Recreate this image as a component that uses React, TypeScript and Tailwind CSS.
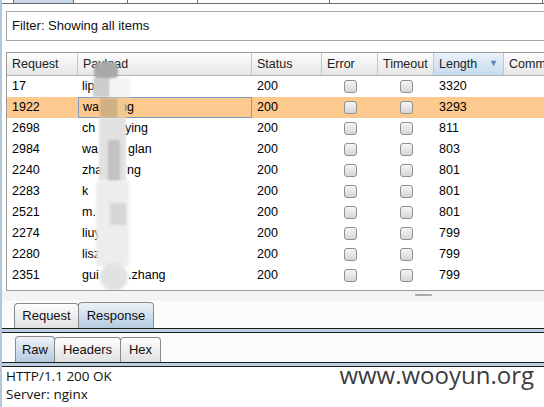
import React from 'react';

const rows = [
  { id: '17', left: 'lip', w: 0, right: '', len: '3320' },
  { id: '1922', left: 'wa', w: 37, right: 'ng', len: '3293', sel: true },
  { id: '2698', left: 'ch', w: 43, right: 'ying', len: '811' },
  { id: '2984', left: 'wa', w: 46, right: 'glan', len: '803' },
  { id: '2240', left: 'zha', w: 45, right: 'ng', len: '801' },
  { id: '2283', left: 'k', w: 0, right: '', len: '801' },
  { id: '2521', left: 'm.', w: 0, right: '', len: '801' },
  { id: '2274', left: 'liuy', w: 0, right: '', len: '799' },
  { id: '2280', left: 'lisz', w: 0, right: '', len: '799' },
  { id: '2351', left: 'gui', w: 46, right: '.zhang', len: '799' },
];

const cols = 'grid grid-cols-[71px_174px_70px_56px_56px_70px_120px]';

function Check() {
  return (
    <span className="block h-[13px] w-[13px] rounded-[3px] border border-[#8e8f90] bg-linear-to-b from-[#f5f5f5] to-[#d6d6d6]" />
  );
}

function Tab({ label, w, active }: { label: string; w: string; active?: boolean }) {
  return (
    <div
      className={`${w} flex items-center justify-center rounded-t-[4px] border border-b-0 border-[#8a8a8a] text-[13px] text-[#111] -ml-px first:ml-0 ${
        active
          ? 'h-[26px] bg-linear-to-b from-[#eef3f8] to-[#b5cadf]'
          : 'h-[25px] bg-linear-to-b from-[#fdfdfd] to-[#e0e0e0]'
      }`}
    >
      {label}
    </div>
  );
}

export default function App() {
  return (
    <div className="flex h-[407px] w-[544px] flex-col overflow-hidden border-l-2 border-[#b4c6d9] bg-[#fbfbfb] font-['Liberation_Sans',Arial,sans-serif]">
      {/* top tab strip remnants */}
      <div className="flex h-[4px] shrink-0 border-b border-[#6b6b6b] bg-white">
        <div className="w-[12px] border-r border-[#6b6b6b]" />
        <div className="w-[60px] border-r border-[#6b6b6b] bg-[#c9d8e7]" />
        <div className="w-[54px] border-r border-[#6b6b6b]" />
        <div className="w-[70px] border-r border-[#6b6b6b]" />
        <div className="w-[132px] border-r border-[#6b6b6b]" />
        <div className="w-[213px] border-r border-[#6b6b6b]" />
      </div>

      <div className="shrink-0 bg-white pb-[0px]">
        {/* filter */}
        <div className="ml-[4px] mt-[7px] flex h-[30px] items-center border border-r-0 border-[#a5a5a5] bg-white pl-[5px] text-[13px] text-[#111]">
          Filter: Showing all items
        </div>

        {/* results table */}
        <div className="relative ml-[4px] mt-[11px] h-[239px] overflow-hidden border border-r-0 border-[#9c9c9c] bg-white text-[12.5px] text-black">
          <div className={`${cols} h-[23px] border-b border-[#b4b4b4] text-[#222]`}>
            {['Request', 'Payload', 'Status', 'Error', 'Timeout'].map((h) => (
              <div
                key={h}
                className="flex items-center border-r border-[#c6c6c6] bg-linear-to-b from-[#fdfdfd] to-[#e6e6e6] pl-[5px]"
              >
                {h}
              </div>
            ))}
            <div className="flex items-center justify-between border-r border-[#c6c6c6] bg-linear-to-b from-[#eaf2fa] to-[#c6daee] pl-[5px] pr-[5px]">
              Length
              <span className="text-[9px] text-[#5a7fa8]">▼</span>
            </div>
            <div className="flex items-center bg-linear-to-b from-[#fdfdfd] to-[#e6e6e6] pl-[5px]">Comment</div>
          </div>

          {rows.map((r) => (
            <div key={r.id} className={`${cols} h-[21px] ${r.sel ? 'bg-[#fdc98f]' : ''}`}>
              <div className="flex items-center pl-[5px]">{r.id}</div>
              <div
                className={`flex items-center pl-[4px] ${r.sel ? 'border border-[#7d9cc4]' : ''}`}
              >
                <span className="inline-block" style={r.w ? { width: r.w } : undefined}>
                  {r.left}
                </span>
                {r.right && <span>{r.right}</span>}
              </div>
              <div className="flex items-center pl-[5px]">200</div>
              <div className="flex items-center justify-center">
                <Check />
              </div>
              <div className="flex items-center justify-center">
                <Check />
              </div>
              <div className="flex items-center pl-[5px]">{r.len}</div>
              <div />
            </div>
          ))}

          {/* blurred payload overlay */}
          <div className="absolute left-[87px] top-[9px] h-[18px] w-[24px] rounded-[6px] bg-[#a9a9a9] blur-[1px]" />
          <div className="absolute left-[86px] top-[25px] h-[19px] w-[17px] bg-[#cdcdcd] blur-[1px]" />
          <div className="absolute left-[103px] top-[25px] h-[19px] w-[20px] bg-[#f4f4f4] blur-[1px]" />
          <div className="absolute left-[93px] top-[45px] h-[20px] w-[18px] bg-[#cfb083] blur-[1px]" />
          <div className="absolute left-[111px] top-[45px] h-[20px] w-[8px] bg-[#f0c890] blur-[1px]" />
          <div className="absolute left-[92px] top-[65px] h-[63px] w-[27px] bg-[#e1e1e1] blur-[1px]" />
          <div className="absolute left-[101px] top-[87px] h-[41px] w-[12px] bg-[#c2c2c2] blur-[1px]" />
          <div className="absolute left-[89px] top-[128px] h-[85px] w-[33px] bg-[#ededed] blur-[1.5px]" />
          <div className="absolute left-[103px] top-[150px] h-[22px] w-[16px] bg-[#d6d6d6] blur-[1px]" />
          <div className="absolute left-[93px] top-[210px] h-[28px] w-[28px] rounded-full bg-[#e2e2e2] blur-[1.5px]" />
        </div>
      </div>

      {/* splitter */}
      <div className="h-[10px] shrink-0 bg-[#f3f3f3] pl-[413px] pt-[3px]">
        <div className="h-[2px] w-[17px] rounded-full bg-[#a9a9a9]" />
      </div>

      {/* request / response tabs */}
      <div className="flex h-[27px] shrink-0 items-end pl-[12px]">
        <Tab label="Request" w="w-[65px]" />
        <Tab label="Response" w="w-[76px]" active />
      </div>
      <div className="h-[5px] shrink-0 border-y border-[#1c1c1c] bg-[#bdd0e3]" />

      {/* raw / headers / hex tabs */}
      <div className="flex h-[29px] shrink-0 items-end pl-[13px]">
        <Tab label="Raw" w="w-[40px]" active />
        <Tab label="Headers" w="w-[67px]" />
        <Tab label="Hex" w="w-[41px]" />
      </div>
      <div className="h-[5px] shrink-0 border-y border-[#1c1c1c] bg-[#bdd0e3]" />

      {/* response body */}
      <div className="relative flex-1 bg-white pl-[4px] font-['Open_Sans',sans-serif] text-[13.5px] leading-[18px] text-[#111]">
        <div>HTTP/1.1 200 OK</div>
        <div>Server: nginx</div>
        <div>Date: Thu, 04 Feb 2016 08:08:35 GMT</div>
        <div className="absolute right-[10px] top-[-4px] font-['Open_Sans',sans-serif] text-[24px] leading-[24px] text-[#3d3d3d]">
          www.wooyun.org
        </div>
      </div>
    </div>
  );
}
